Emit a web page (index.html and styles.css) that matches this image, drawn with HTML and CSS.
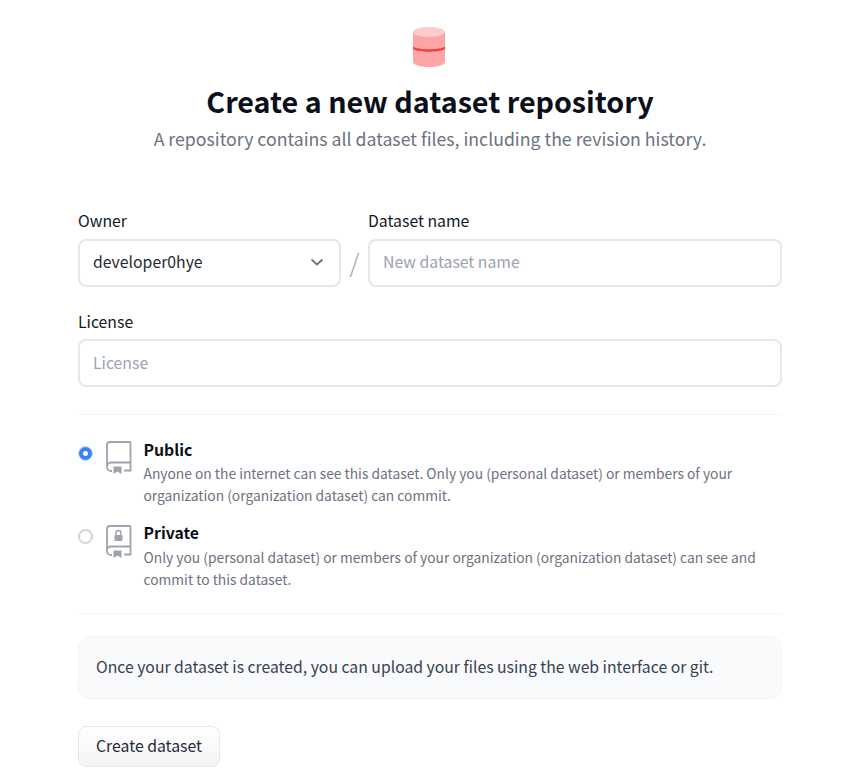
FILE: index.html
```html
<!DOCTYPE html>
<html lang="en">
<head>
    <meta charset="UTF-8">
    <meta name="viewport" content="width=device-width, initial-scale=1.0">
    <title>Create a new dataset repository</title>
    <link rel="stylesheet" href="styles.css">
</head>
<body>
    <form class="container">
        <header class="page-head">
            <svg class="logo" width="32" height="40" viewBox="0 0 32 40">
                <path d="M0 5v30c0 2.800 7 5 16 5s16-2.200 16-5V5z" fill="#fda4a6"/>
                <ellipse cx="16" cy="5" rx="16" ry="5" fill="#fecaca"/>
                <path d="M0 19.500c3 1.800 9 2.800 16 2.800s13-1 16-2.800v2.600c-3 1.800-9 2.800-16 2.800s-13-1-16-2.800z" fill="#ef4444"/>
            </svg>
            <h1>Create a new dataset repository</h1>
            <p class="subtitle">A repository contains all dataset files, including the revision history.</p>
        </header>

        <div class="name-row">
            <div class="field owner-field">
                <label class="field-label">Owner</label>
                <div class="input select-box">
                    <span>developer0hye</span>
                    <svg class="chevron" width="16" height="16" viewBox="0 0 16 16">
                        <path d="M3.500 5.500 9 10.500l5.500-5" fill="none" stroke="#6b7280" stroke-width="1.800"/>
                    </svg>
                </div>
            </div>
            <span class="slash">/</span>
            <div class="field name-field">
                <label class="field-label">Dataset name</label>
                <input class="input" type="text" placeholder="New dataset name">
            </div>
        </div>

        <div class="field license-field">
            <label class="field-label">License</label>
            <input class="input" type="text" placeholder="License">
        </div>

        <div class="visibility">
            <div class="option">
                <span class="radio radio-on"></span>
                <svg class="book" width="26" height="33" viewBox="0 0 26 33">
                    <path d="M24.500 23V2a1 1 0 0 0-1-1H4a3 3 0 0 0-3 3v22a4 4 0 0 0 4 4h1M24.500 21.500H5a4 4 0 0 0-4 4M18 29.500h6.500V21" fill="none" stroke="#9ca3af" stroke-width="1.800"/>
                    <path d="M7.500 25.500h8v7.500l-4-2.500-4 2.500z" fill="#9ca3af"/>
                </svg>
                <div class="option-text">
                    <div class="option-title">Public</div>
                    <p>Anyone on the internet can see this dataset. Only you (personal dataset) or members of your organization (organization dataset) can commit.</p>
                </div>
            </div>
            <div class="option">
                <span class="radio"></span>
                <svg class="book" width="26" height="33" viewBox="0 0 26 33">
                    <path d="M24.500 23V2a1 1 0 0 0-1-1H4a3 3 0 0 0-3 3v22a4 4 0 0 0 4 4h1M24.500 21.500H5a4 4 0 0 0-4 4M18 29.500h6.500V21" fill="none" stroke="#9ca3af" stroke-width="1.800"/>
                    <path d="M7.500 25.500h8v7.500l-4-2.500-4 2.500z" fill="#9ca3af"/>
                    <path d="M10 10V8a2.500 2.500 0 0 1 5 0v2" fill="none" stroke="#9ca3af" stroke-width="1.400"/>
                    <rect x="8.500" y="10" width="8" height="6" rx="1" fill="#9ca3af"/>
                </svg>
                <div class="option-text">
                    <div class="option-title">Private</div>
                    <p>Only you (personal dataset) or members of your organization (organization dataset) can see and commit to this dataset.</p>
                </div>
            </div>
        </div>

        <div class="note">Once your dataset is created, you can upload your files using the web interface or git.</div>

        <button class="create-btn" type="button">Create dataset</button>
    </form>
</body>
</html>
```

FILE: styles.css
```css
* {
    box-sizing: border-box;
}
body {
    margin: 0;
    background: #fff;
    color: #111827;
    font-family: "Noto Sans CJK SC", "Source Sans Pro", "Noto Sans", sans-serif;
    font-size: 15.8px;
    line-height: 24px;
}
.container {
    width: 704px;
    margin-left: 78px;
    padding-top: 27px;
}
.page-head {
    display: flex;
    flex-direction: column;
    align-items: center;
    margin-bottom: 57px;
}
.logo {
    display: block;
    margin: 0 2px 16px 0;
}
h1 {
    margin: 0;
    font-size: 28.7px;
    line-height: 36px;
    font-weight: 700;
    color: #0b0f19;
}
.subtitle {
    margin: 5px 0 0;
    font-size: 17.7px;
    line-height: 28px;
    color: #6b7280;
}
.name-row {
    display: flex;
    align-items: flex-end;
}
.owner-field {
    width: 263px;
}
.name-field {
    flex: 1;
}
.slash {
    width: 27px;
    height: 48px;
    text-align: center;
    font-size: 25px;
    line-height: 46px;
    font-weight: 300;
    color: #9ca3af;
}
.field-label {
    display: block;
    margin-bottom: 6px;
    color: #111827;
}
.input {
    display: block;
    width: 100%;
    height: 48px;
    padding: 0 14px 3px 13px;
    border: 2px solid #e5e7eb;
    border-radius: 8px;
    background: #fff;
    color: #1f2937;
    font: inherit;
    outline: none;
}
.input::placeholder {
    color: #9ca3af;
}
.select-box {
    display: flex;
    align-items: center;
    justify-content: space-between;
    padding-right: 15px;
}
.license-field {
    margin-top: 23px;
}
.license-field .field-label {
    margin-bottom: 5px;
}
.license-field .input {
    padding-bottom: 1px;
}
.visibility {
    margin-top: 27px;
    padding: 23px 0 23px;
    border-top: 1px solid #f3f4f6;
    border-bottom: 1px solid #f3f4f6;
}
.option {
    display: flex;
    align-items: flex-start;
    margin-bottom: 15px;
}
.option:last-child {
    margin-bottom: 0;
}
.option:last-child .book {
    margin-top: 4px;
}
.option:last-child p {
    margin-top: 1px;
}
.radio {
    flex: none;
    width: 15px;
    height: 15px;
    margin-top: 8px;
    border: 2px solid #d1d5db;
    border-radius: 50%;
}
.radio-on {
    width: 13px;
    height: 13px;
    margin: 9px 1px 0;
    border: 4px solid #3b82f6;
    box-shadow: 0 0 0 1px #c9dbfb;
    background: #fff;
}
.book {
    flex: none;
    margin: 3px 11.5px 0 13px;
}
.option-title {
    font-weight: 600;
    color: #0b0f19;
}
.option-text p {
    margin: 0;
    font-size: 13.8px;
    line-height: 22px;
    color: #6b7280;
}
.note {
    height: 63px;
    margin-top: 22px;
    padding: 18px 17px;
    border: 1px solid #f3f4f6;
    border-radius: 12px;
    background: #f9fafb;
    font-size: 15.75px;
    color: #374151;
}
.create-btn {
    display: block;
    width: 142px;
    height: 41px;
    margin-top: 27px;
    padding: 0 0 2px;
    border: 1px solid #e5e7eb;
    border-radius: 8px;
    background: linear-gradient(to bottom, #fff, #f3f4f6);
    color: #1f2937;
    font: inherit;
}
```
